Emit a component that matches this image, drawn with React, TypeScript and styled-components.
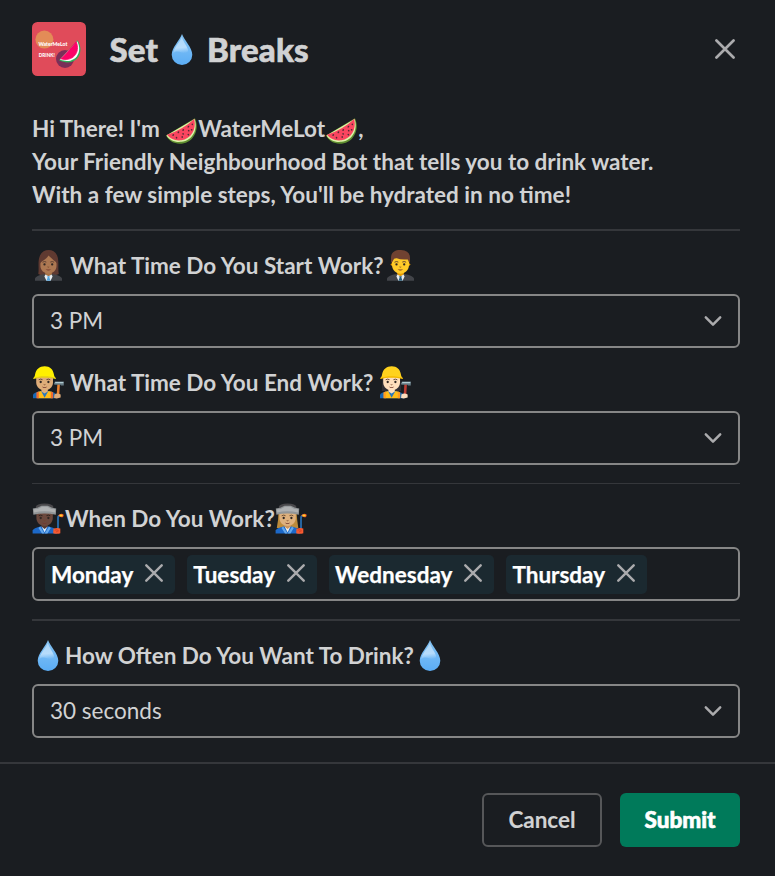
import React from 'react';
import styled, { createGlobalStyle } from 'styled-components';

const GlobalStyle = createGlobalStyle`
  * { box-sizing: border-box; }
  body { margin: 0; background: #1a1d21; }
`;

const Modal = styled.main`
  width: 775px;
  height: 876px;
  display: flex;
  flex-direction: column;
  background: #1a1d21;
  color: #d1d2d3;
  font-family: Lato, sans-serif;
  font-size: 22.5px;
  line-height: 33px;
  overflow: hidden;
`;

const Header = styled.header`
  display: flex;
  align-items: center;
  height: 54px;
  margin: 22px 35px 0 32px;
`;

const Title = styled.h1`
  flex: 1;
  display: flex;
  align-items: center;
  margin: 0 0 0 23.5px;
  font-size: 33px;
  font-weight: 900;
  line-height: 45px;
  letter-spacing: 0.15px;
  -webkit-text-stroke: 0.6px currentColor;
  white-space: pre;
`;

const IconButton = styled.button`
  display: flex;
  align-items: center;
  justify-content: center;
  padding: 0;
  border: 0;
  background: none;
  color: #ababad;
`;

const CloseButton = styled(IconButton)`
  width: 30px;
  height: 30px;
  margin-bottom: 1px;
`;

const Body = styled.section`
  height: 686px;
  padding: 36px 35px 0 32px;
`;

const Intro = styled.p`
  margin: 0;
  height: 99px;
  font-weight: 700;
  white-space: pre;
`;

const Divider = styled.hr<{ $top: number; $bottom: number; $thin?: boolean }>`
  height: ${(p) => (p.$thin ? 1 : 2)}px;
  border: 0;
  margin: ${(p) => p.$top}px 0 ${(p) => p.$bottom}px;
  background: #35373b;
`;

const Field = styled.div`
  height: 99px;
  & + & { margin-top: 18px; }
`;

const Label = styled.label`
  display: block;
  height: 33px;
  margin-bottom: 12px;
  font-weight: 700;
  white-space: pre;
`;

const Glyph = styled.svg`
  display: inline-block;
  width: 33px;
  height: 33px;
  vertical-align: top;
  overflow: visible;
`;

const Control = styled.div<{ $tags?: boolean }>`
  display: flex;
  align-items: center;
  justify-content: ${(p) => (p.$tags ? 'flex-start' : 'space-between')};
  gap: 12px;
  height: 54px;
  padding: ${(p) => (p.$tags ? '0 11px' : '0 16px')};
  border: 2px solid #868686;
  border-radius: 6px;
`;

const Value = styled.span`
  padding-bottom: 2px;
`;

const Tag = styled.span`
  display: flex;
  align-items: center;
  gap: 12px;
  height: 39px;
  padding: 0 12px 0 6px;
  border-radius: 5px;
  background: #1b2930;
  color: #fff;
  font-weight: 700;
  -webkit-text-stroke: 0.25px currentColor;
`;

const TagRemove = styled(IconButton)`
  margin-bottom: 2px;
`;

const Footer = styled.footer`
  flex: 1;
  display: flex;
  justify-content: flex-end;
  gap: 18px;
  padding: 29px 35px 0;
  border-top: 2px solid #35373b;
`;

const Button = styled.button<{ $primary?: boolean }>`
  width: 120px;
  height: 54px;
  padding: 0 0 2px;
  border: ${(p) => (p.$primary ? '0' : '2px solid #565759')};
  border-radius: 6px;
  background: ${(p) => (p.$primary ? '#007a5a' : 'transparent')};
  color: ${(p) => (p.$primary ? '#fff' : '#d1d2d3')};
  font: ${(p) => (p.$primary ? 900 : 700)} 22.5px Lato, sans-serif;
  -webkit-text-stroke: ${(p) => (p.$primary ? '0.6px' : '0.1px')} currentColor;
`;

const Cross = ({ size = 18 }: { size?: number }) => (
  <svg width={size} height={size} viewBox="0 0 18 18" fill="none" stroke="#ababad" strokeWidth="2.4" strokeLinecap="round">
    <path d="M1.3 1.3 16.7 16.7M16.7 1.3 1.3 16.7" />
  </svg>
);

const Chevron = () => (
  <svg width="18" height="12" viewBox="0 0 18 12" fill="none" stroke="#ababad" strokeWidth="2.5" strokeLinecap="round" strokeLinejoin="round">
    <path d="M1.8 2.4 9 9.7 16.2 2.4" />
  </svg>
);

const AppLogo = () => (
  <svg width="54" height="54" viewBox="0 0 54 54">
    <rect width="54" height="54" rx="5.5" fill="#e04b5a" />
    <circle cx="12.4" cy="17.6" r="9" fill="#e38c57" />
    <circle cx="33" cy="37" r="9" fill="#7a2f58" />
    <path d="M45.5 18.2C54 31 43 46 27 38.3Z" fill="#2fae58" />
    <path d="M45.2 19.2C51.6 31 42 43.3 28 37.6Z" fill="#fff" />
    <path d="M44.2 19.8C48.8 30.5 40.6 40.2 28.8 36.8Q36 30 44.2 19.8Z" fill="#fb0467" stroke="#fb0467" strokeWidth=".8" />
    <g fill="#fff" fontFamily="Lato, sans-serif" fontWeight="900">
      <text x="6.4" y="24.4" fontSize="5.6" textLength="29" lengthAdjust="spacingAndGlyphs">WaterMeLot</text>
      <text x="6.8" y="35" fontSize="5.4" textLength="16" lengthAdjust="spacingAndGlyphs">DRINK!</text>
    </g>
  </svg>
);

const Drop = () => (
  <Glyph viewBox="0 0 33 33">
    <defs>
      <linearGradient id="drop-body" x1="0" y1="0" x2="0" y2="1">
        <stop offset="0" stopColor="#81bfee" />
        <stop offset=".5" stopColor="#72b9f5" />
        <stop offset="1" stopColor="#5badf5" />
      </linearGradient>
      <linearGradient id="drop-shine" x1=".4" y1="0" x2=".5" y2="1">
        <stop offset="0" stopColor="#add7f8" />
        <stop offset=".65" stopColor="#b7dcfb" />
        <stop offset="1" stopColor="#b7dcfb" stopOpacity="0" />
      </linearGradient>
    </defs>
    <path d="M16 1C14 7 5.7 14.5 5.7 21.7A10.3 10.2 0 0 0 26.3 21.7C26.3 14.5 18 7 16 1Z" fill="url(#drop-body)" />
    <path d="M15.8 4C14 9 7.4 15 7.2 20.5C8.6 17.8 12.5 18 15.5 19.5C18.7 21 22.2 20.7 22 16.8C20.8 12.5 17 8.5 15.8 4Z" fill="url(#drop-shine)" />
  </Glyph>
);

const Watermelon = () => (
  <Glyph viewBox="0 0 33 33">
    <path d="M29.9 6.2C35 17 29 30.3 16.7 31.7C9.7 32.5 3.7 29 1 23.6Z" fill="#608f31" />
    <path d="M29.6 6.9C33.2 17.8 27.4 28.4 16.5 29.8C9.9 30.7 4.3 27.8 1.5 23.4Z" fill="#dff2a9" />
    <path d="M29.2 7C31.8 17.6 26 26.8 16.3 28.3C10.3 29 5.3 26.9 2 22.8Q18 17.5 29.2 7Z" fill="#fa455f" />
    <g stroke="#512b35" strokeWidth="1.45" strokeLinecap="round">
      <path d="M8.4 22.8l-.4.5M13.6 20l-.4.5M18.4 17.7l-.4.5M23.6 14.4l-.4.5M11.5 25.5l.1.4M17.2 24.8v.5M18.1 21.7l.1.4M23.2 22.5l.3.3M23.6 18.5l.2.3M26.5 17.7l.3.2M27.3 12.2v.3" />
    </g>
  </Glyph>
);

const FaceFeatures = ({ y = 15.4, brow = '#573b30' }: { y?: number; brow?: string }) => (
  <g transform={`translate(0 ${y - 15.4})`}>
    <circle cx="12.5" cy="15.4" r="1.15" fill="#302723" />
    <circle cx="20.2" cy="15.4" r="1.15" fill="#302723" />
    <path d="M10.8 13Q12.4 11.9 14 12.9M18.6 12.9Q20.3 11.9 21.8 13" fill="none" stroke={brow} strokeWidth=".9" strokeLinecap="round" />
    <path d="M15.5 17.9Q16.4 18.5 17.2 17.9" fill="none" stroke="#744426" strokeWidth=".8" />
    <path d="M13.6 20Q16.4 21.1 19.1 20Q16.4 23 13.6 20Z" fill="#74382e" />
  </g>
);

const OfficeWorker = ({ woman = false }: { woman?: boolean }) => (
  <Glyph viewBox="0 0 33 33">
    {woman && <path d="M6.3 25C7.2 19 5.5 12 8 6.5C11.4-.8 22-.8 25.1 6.5C27.4 12 25.6 19 26.8 25Q21 28 16.5 26Q11 28 6.3 25Z" fill="#603a31" />}
    <path d="M13.2 21h6.7v6.5h-6.7z" fill={woman ? '#a57043' : '#e59a00'} />
    <path d="M3 31.8V29.5Q3.5 26.4 12.8 24.9L16.4 28 20 24.9Q29.5 26.4 30 29.5V31.8Z" fill="#424449" />
    <path d="M13.4 25.4 12.4 27.5 14.4 31.8H18.6L20.6 27.5 19.6 25.4 16.5 27.3Z" fill="#e9edf0" />
    <path d="M15.1 27.2H17.9L17.4 28.5 18.5 31.8H14.5L15.6 28.5Z" fill={woman ? '#57a7df' : '#285e7c'} />
    {woman ? (
      <>
        <path d="M8.4 13C8.4 7.7 12 4.4 16.5 4.4S24.5 7.7 24.5 13V17C24.5 21.2 20.8 24.7 16.5 24.7S8.4 21.2 8.4 17Z" fill="#ad7852" />
        <path d="M7.5 15C7.4 6.1 11.2 3.2 16.5 3.2S25.7 6.1 25.4 15C23.7 12.2 21 11 16.5 6.5C14 10.6 9.4 12 7.5 15Z" fill="#603a31" />
      </>
    ) : (
      <>
        <ellipse cx="16.5" cy="15.5" rx="10" ry="2.5" fill="#e59a00" />
        <path d="M8 10C8 4.7 12 3 16.5 3S25 4.7 25 10V16C25 21 20.8 24.7 16.5 24.7S8 21 8 16Z" fill="#ffca28" />
        <path d="M7 14V8.5C7.2 3 11.7.7 17 1.1Q26 1.5 26 9V14Q24.4 12.8 23.8 10.4Q16.5 11 12.8 9.3Q9.7 9 9.2 11.2Q8.8 12.8 7 14Z" fill="#704231" />
      </>
    )}
    <FaceFeatures />
  </Glyph>
);

const Hammer = ({ handle }: { handle: string }) => (
  <g>
    <path d="M25.4 17.5H28L27.2 30H24.6Z" fill={handle} />
    <path d="M21.8 17.9L23 15.4H31.8V19.4H29L28.4 18.8H22.7Z" fill="#647982" />
    <path d="M23.3 15.9H31.4V17.2H23Z" fill="#b0cbd3" />
  </g>
);

const Builder = ({ woman = false }: { woman?: boolean }) => {
  const skin = woman ? '#ffdfbd' : '#dfad79';
  return (
    <Glyph viewBox="0 0 33 33">
      {woman && <path d="M3.3 12.5H21.5L22.2 25H2.8Z" fill="#302e33" />}
      <path d="M1 32.2V29Q1.3 26.3 9.5 25H16Q24 26.1 25 29.4V32.2Z" fill="#1767b5" />
      <path d="M5.5 26 9 25 12.6 28 16.5 25 20.6 26V32.2H5.5Z" fill="#ffbd18" />
      <path d="M4.4 26.4 6.8 25.6V32.2H4.4ZM18.8 25.6 21.2 26.4V32.2H18.8Z" fill={woman ? '#ff9c20' : '#f06b30'} />
      <path d="M9.1 25 12.6 31.8 16.4 25Z" fill="#2878bd" />
      <path d="M9.4 21H15.8V25.4L12.6 27.4 9.4 25.4Z" fill={skin} />
      <path d="M4.2 11H21V16.3C21 21.7 16.5 24.4 12.6 24.4S4.2 21.7 4.2 16.3Z" fill={skin} />
      <g transform="translate(-3.8 0)"><FaceFeatures y={16} /></g>
      <path d="M1.2 12.5C2.1 11.2 2.8 10.6 3 8.8C4.1 3.1 7.4.2 12.7.2S21 3.1 22 8.8C22.2 10.6 23 11 24 12.5C19 10.7 6 10.7 1.2 12.5Z" fill={woman ? '#ffd21d' : '#fff000'} />
      <path d="M1.4 12C7 9.6 18 9.6 23.8 12V13C17 11.2 8 11.2 1.4 13Z" fill={woman ? '#f5b900' : '#e6cd18'} />
      <Hammer handle={woman ? '#bd3c32' : '#ec822f'} />
      <path d="M22.4 28.4Q25.5 26.5 28.6 28.6V31.6Q25.5 33 22.1 32Z" fill={skin} />
    </Glyph>
  );
};

const Welder = ({ light = false }: { light?: boolean }) => (
  <Glyph viewBox="0 0 33 33">
    {light && <path d="M3.5 10H21.5Q22 18 23.3 26H1.8Q3.5 17 3.5 10Z" fill="#bd8b3b" />}
    <path d="M.6 31.5V28.6Q1 26 9.5 24.2H15.5Q24 26 25 28.5V31.5Z" fill="#1c68c8" />
    <path d="M9.6 24.4 12.6 30.5 15.5 24.4Z" fill={light ? '#f4efe6' : '#d8eafa'} />
    <path d="M8.2 24.4 12.5 31.5H10L6.5 26ZM17 24.4 12.7 31.5H15.4L18.8 26Z" fill="#63a7ec" />
    <path d="M9.4 20H15.8V24.4L12.6 27 9.4 24.4Z" fill={light ? '#ca945e' : '#563a32'} />
    <path d="M4.4 9H20.8V16C20.8 21 16.5 24 12.6 24S4.4 21 4.4 16Z" fill={light ? '#deb17e' : '#6b483d'} />
    <g transform="translate(-3.8 0)"><FaceFeatures y={16} brow={light ? '#65482e' : '#2b211e'} /></g>
    <path d="M3.7 5Q4.6 1.5 12.5 1.5Q20.6 1.5 21.5 5L20.8 8H4.5Z" fill="#49484b" />
    <path d="M.8 6.5 5.4 5.8 9.5 3.8H15.8L20 5.8 24.2 6.5 23.8 12.8Q12.5 10.4 1.4 12.8Z" fill="#929698" />
    <path d="M2.1 7.2 5.8 7 10 4.7H15.4L19.3 7 23 7.2V10.5Q12.5 8 2 10.5Z" fill="#afb1b2" />
    <path d="M26 29V15.8Q26.1 13.3 29 13.2" fill="none" stroke="#286dae" strokeWidth="1.8" />
    <path d="M26.2 13.5Q28.2 11 31.4 12.2Q32.1 14 31 15Q28.5 15.8 26.2 13.5Z" fill="#f15a24" />
    <ellipse cx="29" cy="13.4" rx="1.7" ry="1" fill="#ffd32c" />
    <path d="M21.4 26.8Q25 25.2 28.3 26.4V31.2Q25 32.2 21.2 31.2Z" fill="#f65b31" />
    <path d="M22.7 28.2Q25.5 27 26.5 28.8L24 30" fill="none" stroke="#ce3f28" strokeWidth=".8" />
  </Glyph>
);

const Select = ({ value }: { value: string }) => (
  <Control>
    <Value>{value}</Value>
    <Chevron />
  </Control>
);

const days = ['Monday', 'Tuesday', 'Wednesday', 'Thursday'];

export default function App() {
  return (
    <>
      <GlobalStyle />
      <Modal>
        <Header>
          <AppLogo />
          <Title>Set <Drop /> Breaks</Title>
          <CloseButton aria-label="Close"><Cross size={20} /></CloseButton>
        </Header>
        <Body>
          <Intro>
            {"Hi There! I'm "}<Watermelon />WaterMeLot<Watermelon />{',\n'}
            {'Your Friendly Neighbourhood Bot that tells you to drink water.\n'}
            {"With a few simple steps, You'll be hydrated in no time!"}
          </Intro>
          <Divider $top={18} $bottom={18} />
          <Field>
            <Label><OfficeWorker woman />{' What Time Do You Start Work?'}<OfficeWorker /></Label>
            <Select value="3 PM" />
          </Field>
          <Field>
            <Label><Builder />{' What Time Do You End Work? '}<Builder woman /></Label>
            <Select value="3 PM" />
          </Field>
          <Divider $top={18} $bottom={18} $thin />
          <Field>
            <Label><Welder />When Do You Work?<Welder light /></Label>
            <Control $tags>
              {days.map((day) => (
                <Tag key={day}>
                  {day}
                  <TagRemove aria-label={`Remove ${day}`}><Cross /></TagRemove>
                </Tag>
              ))}
            </Control>
          </Field>
          <Divider $top={18} $bottom={18} />
          <Field>
            <Label><Drop />How Often Do You Want To Drink?<Drop /></Label>
            <Select value="30 seconds" />
          </Field>
        </Body>
        <Footer>
          <Button>Cancel</Button>
          <Button $primary>Submit</Button>
        </Footer>
      </Modal>
    </>
  );
}
